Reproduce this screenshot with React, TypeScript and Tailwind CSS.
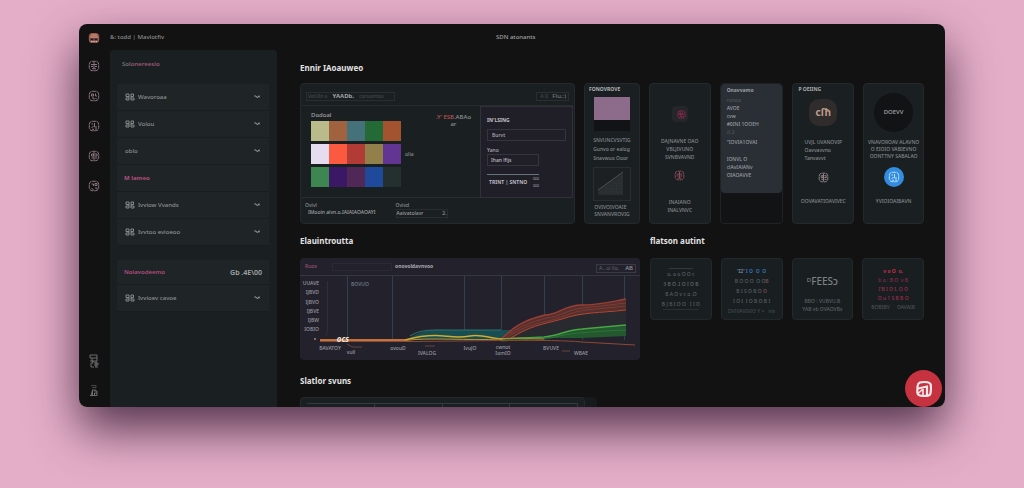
import React from 'react';

const blobPaths = [
  'M3 4.500h6M3 6.500h2M7 6.500h2M4 8.800h4M6 2v7',
  'M3.500 4h2v2h-2zM7.500 3.500v2.500H9M4 8h2v1.500M7.500 8L9 9.500',
  'M3.500 8l2-2M6.500 3v4H9M4 9.300h2M8 8v2M3.500 4H5',
  'M3.500 4h2v2h-2zM7 4h2v2H7M3.500 8h2M7 8h2.500M6 2v8',
  'M3.500 4h2v2M7 3.500h2v2H7zM3.500 8.500l2 1M7 8h2v1.500',
];

function Blob({ variant, className }: { variant: number; className?: string }) {
  return (
    <svg viewBox="0 0 12 12" className={className ?? 'size-3'} fill="none" stroke="currentColor" strokeWidth="1">
      <rect x="1.300" y="1.300" width="9.400" height="9.400" rx="3" strokeDasharray="4 0.500" />
      <path d={blobPaths[variant]} />
    </svg>
  );
}

function RowGlyph() {
  return (
    <svg viewBox="0 0 10 8" className="h-2 w-[10px] shrink-0 text-[#8d9394]" fill="none" stroke="currentColor" strokeWidth="0.900">
      <path d="M1 1h3v2.500H1zM1 5h3v2H1zM4 3.500V5M6 1h2.500v2.500H6zM6 5h3v2H6M6 3.500V7" />
    </svg>
  );
}

function Chevron() {
  return (
    <svg viewBox="0 0 6 4" className="h-1 w-[6px] text-[#969c9d]" fill="none" stroke="currentColor" strokeWidth="1">
      <path d="M0.300 1h1.700l.8 1.400h1L4.500 1h1.200M5 1v1.500" />
    </svg>
  );
}

function MenuRow({ label, glyph = true }: { label: string; glyph?: boolean }) {
  return (
    <button className="flex h-[27px] w-full items-center gap-[3px] border-b border-[#191d1f] bg-[#1f2426] pr-[9px] pl-2 text-left font-medium">
      {glyph && <RowGlyph />}
      <span className="flex-1 text-[#8c9192]">{label}</span>
      <Chevron />
    </button>
  );
}

function Rail() {
  return (
    <nav aria-label="Tools" className="flex w-[31px] shrink-0 flex-col items-center pr-[2px] pb-[3px] text-[#8b7580]">
      <div className="flex h-[27px] items-center">
        <svg viewBox="0 0 12 12" className="size-3">
          <rect x="0.800" y="1" width="10.400" height="10" rx="3.600" fill="#94594b" />
          <path d="M2 5h8M3 3h6" stroke="#dda183" strokeWidth="0.900" />
          <path d="M2.500 6.500h3v1.800h-3zM6.500 6.500h3v1.800h-3z" fill="#1f1b35" />
          <path d="M3 9.500h1.500M5.300 9.500h1.400M7.700 9.500H9" stroke="#c9c0c2" />
        </svg>
      </div>
      {[0, 1, 2, 3, 4].map((n) => (
        <button key={n} aria-label={'Tool ' + (n + 1)} className="flex h-[30px] items-center">
          <Blob variant={n} />
        </button>
      ))}
      <button aria-label="Library" className="mt-auto flex h-[29px] items-center text-[#77777a]">
        <svg viewBox="0 0 10 14" className="h-[14px] w-[10px]" fill="none" stroke="currentColor" strokeWidth="0.900">
          <path d="M1 1h7v3H1zM3 4v3h5V4M1 7h3v2H2v4h3M5 9h4v2H5M6 13h3M7 7v6" />
        </svg>
      </button>
      <button aria-label="Settings" className="flex h-[29px] items-center text-[#77777a]">
        <svg viewBox="0 0 10 14" className="h-[14px] w-[10px]" fill="none" stroke="currentColor" strokeWidth="0.900">
          <path d="M2 2.500h5v2H3" stroke="#4d4d50" />
          <path d="M3 7h4M2 12.500l1.500-5v5M1 12.500h7M5 8h3v2H5.500v2M8 10v2.500" />
        </svg>
      </button>
    </nav>
  );
}

function Sidebar() {
  return (
    <aside className="w-[167px] shrink-0 rounded-t bg-[#1a1f21] pr-2 pl-[7px]">
      <h2 className="mb-[5px] flex h-[29px] items-center pl-[5px] font-semibold text-[#9c5878]">
        <span className="text-[#77707a]">Sol</span>onereesio
      </h2>
      <MenuRow label="Wavoroaa" />
      <MenuRow label="Volou" />
      <MenuRow label="oblo" glyph={false} />
      <div className="flex h-[27px] items-center border-b border-[#191d1f] bg-[#1f2426] pl-[7px] font-bold text-[#b04e80]">
        M lameo
      </div>
      <MenuRow label="Ivviow Vvands" />
      <MenuRow label="Ivvtoo evioeoo" />
      <div className="mt-[14px] flex h-[25px] items-center justify-between border-b border-[#191d1f] bg-[#1f2426] pr-[7px] pl-[7px] font-semibold text-[#b04e80]">
        Noiavodeemo
        <span className="text-[7px] text-[#a4a9aa]">Gb .4E\00</span>
      </div>
      <MenuRow label="Ivvioev cavoe" />
    </aside>
  );
}

const swatches = [
  ['bg-[#b9bb8a]', 'bg-[#a0623f]', 'bg-[#45727a]', 'bg-[#236a37]', 'bg-[#a35330]'],
  ['bg-[#e5dcf0]', 'bg-[#fb5a41]', 'bg-[#b33b36]', 'bg-[#92804a]', 'bg-[#633593]'],
  ['bg-[#3d8652]', 'bg-[#3a1866]', 'bg-[#512758]', 'bg-[#1f4a9c]', 'bg-[#24302f]'],
];

function ColourCard() {
  return (
    <section className="flex flex-col rounded border border-[#23292c] bg-[#1a1f22] px-px pb-px font-medium text-[#8b9092]">
      <div className="flex h-[22px] items-center justify-between border-b border-[#272c2f] px-1 pt-1">
        <div className="flex h-[9px] w-[89px] items-center gap-[5px] border border-[#292f31] px-px text-[#454b4e]">
          VolUln v <b className="text-[6px] font-bold text-[#a0a4a5]">YAADb,</b> coroomoo
        </div>
        <div className="flex h-[9px] w-[33px] items-center justify-end gap-1 border border-[#292f31] px-[2px] text-[#43494c]">
          A II <span className="text-[6px] text-[#73787b]">Flu,:)</span>
        </div>
      </div>
      <div className="flex h-[92px]">
        <div className="flex flex-1 justify-between border-b border-[#282e30] pt-[6px] pl-[9px]">
          <div className="flex flex-col gap-[3px]">
            <div className="mb-[-1px] text-[6px] text-[#a0a3a4]">Dodoal</div>
            {swatches.map((row, i) => (
              <div key={i} className="flex items-center gap-1">
                <div className="flex">
                  {row.map((c) => (
                    <span key={c} className={'h-5 w-[18px] ' + c} />
                  ))}
                </div>
                {i === 1 && <span>olia</span>}
              </div>
            ))}
          </div>
          <div className="pt-[2px] pr-[9px] text-center text-[6px]">
            <span className="text-[#bf5450]">.Y' ESB.</span>ABAo
            <div>ar</div>
          </div>
        </div>
        <div className="flex w-[93px] flex-col items-start border border-[#30313b] bg-[#201f27] px-[6px] pt-[10px]">
          <b className="mb-[5px] text-[#c2c0c8]">IN'LSING</b>
          <input aria-label="Name" defaultValue="Burvt" className="h-3 w-[79px] border border-[#35353e] px-1 text-[#b0aeb6]" />
          <label htmlFor="kind" className="mt-[6px] text-[#b0aeb6]">Yano</label>
          <input id="kind" defaultValue="Ihan lfijs" className="h-3 w-[52px] border border-[#35353e] px-[3px] text-[#c0bec6]" />
          <div className="mt-2 flex w-[52px] justify-between border-t border-[#65747a] pl-[2px]">
            <b className="pt-1 text-[#b9b7bf]">TRINT | SNTNO</b>
            <span className="text-[#8c8b93]">oo<br />oo</span>
          </div>
        </div>
      </div>
      <div className="flex gap-5 px-[3px] pt-1">
        <div>
          Ovivl
          <div className="pl-[3px] text-[#a0a4a5]">IMooin alvn.o.IAIAIAOAOAYI</div>
        </div>
        <div className="flex-1">
          Ovivd
          <div className="flex w-[52px] justify-between border border-[#282e30] text-[#999da0]">
            <span>Aaivatolavr</span>
            <span>2.</span>
          </div>
        </div>
      </div>
    </section>
  );
}

const tile = 'flex flex-col rounded border border-[#23292c] bg-[#1a1f22] font-medium text-[#868b8d] overflow-hidden whitespace-nowrap';

function TopTiles() {
  return (
    <>
      <section className={tile + ' items-center pt-[2px]'}>
        <b className="self-start pl-1 text-[#b1b5b7]">FONOVROVE</b>
        <div className="mt-1 h-[23px] w-9 bg-[#8c6b8b]" />
        <div className="h-[11px] w-9 bg-[#111314]" />
        <div className="mt-[5px] leading-[9px]">
          SNVUNCVSVTIG
          <br />
          Gunvo or ealog
          <br />
          Snavwuo Ooor
        </div>
        <svg viewBox="0 0 38 34" className="mt-1 h-[34px] w-[38px]">
          <rect x="0.500" y="0.500" width="37" height="33" fill="#1c2022" stroke="#292f31" />
          <path d="M5 23L30 5v23H5z" fill="#282d2f" />
          <path d="M5 23L30 5" stroke="#4b5052" />
          <path d="M8 25h22M13 22h17M18 19h12M21 16h9M25 13h5M28 10h2" stroke="#3a3f41" strokeDasharray="1 1.500" />
        </svg>
        <div className="mt-[3px] leading-[7px]">
          OVIVOIVOAIE
          <br />
          SNVANVROVIG
        </div>
      </section>

      <section className={tile + ' items-center pt-[22px] text-[#8a7f80]'}>
        <div className="flex size-4 items-center justify-center rounded bg-[#24262a] pl-1 text-[#bb2e55]">
          <Blob variant={1} className="size-[9px]" />
        </div>
        <div className="mt-[15px] text-center leading-2">
          DAJNAVNE OAO
          <br />
          VBLJIVUNO
          <br />
          SVNBVAVND
        </div>
        <div className="mt-[9px] text-[#94505e]">
          <Blob variant={0} className="size-[11px]" />
        </div>
        <div className="mt-[17px] text-center leading-2">
          INAIANO
          <br />
          INALVNVC
        </div>
      </section>

      <div className="flex flex-col rounded border border-[#202324] bg-[#121314]">
        <section className="h-[109px] rounded bg-[#292f35] px-[6px] pt-[2px] leading-2 font-medium whitespace-nowrap text-[#9a9fa2]">
          <b>Onavvamo</b>
          <div className="pt-[2px] text-[#50575c]">ronoo</div>
          <div>AVOE</div>
          <div>cvw</div>
          <div>#0INI 1OOEH</div>
          <div className="text-[#50575c]">cl.2</div>
          <div className="pt-[2px]">"IOVIA1OVAI</div>
          <div className="pt-[9px]">IONVL O</div>
          <div>clAvIAlANv</div>
          <div>OIAOAVVE</div>
        </section>
      </div>

      <section className={tile + ' items-center pt-[2px]'}>
        <b className="self-start pl-[5px] text-[#a9adaf]">P OEIING</b>
        <div className="mt-[6px] flex h-[27px] w-7 items-center justify-center rounded-[10px] bg-[#302c2b] text-[10px] font-bold text-[#bd9c8e]">
          cſħ
        </div>
        <div className="mt-[12px] leading-2">
          UVJL UVANOVIP
          <br />
          Oavvavvno
          <br />
          Tanvavvt
        </div>
        <div className="mt-[10px] text-[#99888b]">
          <Blob variant={3} className="size-[11px]" />
        </div>
        <div className="mt-[15px]">OOVAVATIOAVIVEC</div>
      </section>

      <section className={tile + ' items-center pt-[9px]'}>
        <div className="flex size-[39px] items-center justify-center rounded-full bg-[#111314] text-[6px] text-[#a7a9aa]">DOEVV</div>
        <div className="mt-[7px] text-center leading-[7px]">
          VNAVOROAV ALAVNO
          <br />
          O EIOIO VABIEVNO
          <br />
          OONTTNY SABALAO
        </div>
        <div className="mt-[7px] flex size-5 items-center justify-center rounded-full bg-[#338ce0] text-[#bce0fa]">
          <Blob variant={2} className="size-3" />
        </div>
        <div className="mt-[11px]">YVIOIOAIBAVN</div>
      </section>
    </>
  );
}

const yLabels: [string, number][] = [['UUAVE', 9], ['IJBVD', 18], ['IJBVO', 28], ['IJBVE', 37], ['IJBW', 46], ['IOBIO', 55]];
const xLabels: [string, number, number][] = [
  ['BAVATOY', 330, 350], ['vull', 351, 354], ['ovouD', 398, 350], ['IVALOG', 427, 355], ['IvuJO', 470, 350],
  ['cwnot', 503, 349], ['IomIO', 503, 355], ['BVUVE', 551, 350], ['WBAE', 581, 355],
];

function ChartCard() {
  return (
    <section className="overflow-hidden rounded bg-[#23222c] font-medium">
      <div className="flex h-[18px] items-center justify-between border-b border-[#343843] pr-1 pl-[5px]">
        <div className="flex items-center">
          <span className="w-[27px] text-[#99566e]">Ruov</span>
          <span className="h-2 w-[60px] border border-[#2b2a34]" />
          <b className="ml-[3px] text-[#a9a9b3]">onovoldavnvoo</b>
        </div>
        <div className="mt-1 flex h-[9px] w-10 items-center justify-between border border-[#3a3a45] px-[2px] text-[#5b5c68]">
          A.. oi llo, <span className="text-[6px] text-[#93949d]">AB</span>
        </div>
      </div>
      <svg viewBox="0 0 340 84" className="block w-full" fontSize="5" fill="#9a9ba4" role="img" aria-label="Growth over time">
        <g stroke="#2e4150" fill="none">
          <path d="M47.500 0v62M92.500 0v66M164.500 0v64M201.500 0v64M244.500 0v64M282.500 0v64M324.500 0v64" />
          <path d="M27.500 5v48l-1 7" stroke="#302f39" />
        </g>
        {yLabels.map(([t, y]) => (
          <text key={y} x="19" y={y} textAnchor="end">{t}</text>
        ))}
        <text x="51" y="10" fill="#718089">BOVUO</text>
        <path d="M105 64C113 62 118 54 136 54H215V63z" fill="#184e51" />
        <path d="M110 60C118 55 126 54 136 54H201" stroke="#2a7470" fill="none" />
        <path d="M200 64C212 53 220 45 245 39C258 39 264 29 282 29C300 29 310 26 326 23V34C300 35 282 38 262 43C235 49 230 56 211 62z" fill="#55302f" />
        <path d="M211 62C230 51 240 48 262 43C282 38 300 35 326 34V60H245z" fill="#292a2f" />
        <path d="M245 62C258 60 266 54 282 53L326 50V60L282 62z" fill="#24582f" />
        <g fill="none">
          <path d="M200 64C212 53 220 45 245 39C258 39 264 29 282 29C300 29 310 26 326 23" stroke="#9b3e34" strokeWidth="1.300" />
          <path d="M203 62C216 53 224 48 247 42C260 41 268 33 284 32L326 27M206 62C218 54 226 50 248 45C262 42 270 36 286 34L326 30" stroke="#803b31" />
          <path d="M211 62C230 50 240 49 262 43C282 36 300 37 326 34" stroke="#b5472f" />
          <path d="M201 63L244 61C258 60 266 54 282 53L326 49" stroke="#48a546" strokeWidth="1.400" />
          <path d="M201 65L250 62C266 58 280 56 326 54" stroke="#2b7438" />
          <path d="M20 64H105C120 60 134 59 144 60S160 62 170 60S190 62 202 63" stroke="#d1ab2f" strokeWidth="1.500" />
          <path d="M105 64.500C130 61 170 65 200 63S225 63 244 63" stroke="#b99134" />
          <path d="M20 64H105" stroke="#c0743d" strokeWidth="1.800" />
          <path d="M20 65.500H110C180 65 250 63 282 66L335 69" stroke="#8d4933" />
          <path d="M47 68l5 3h10M125 70h10M262 75h8" stroke="#65443d" />
        </g>
        <circle cx="15" cy="63" r="0.900" fill="#c58c72" />
        <text x="43" y="66" textAnchor="middle" fontSize="8" fontWeight="bold" fontStyle="italic" fill="#eee6df">ocs</text>
        {xLabels.map(([t, x, y]) => (
          <text key={t} x={x - 300} y={y - 276} textAnchor="middle">{t}</text>
        ))}
      </svg>
    </section>
  );
}

const small = 'flex h-[62px] flex-col items-center rounded border border-[#22292d] bg-[#191e21] overflow-hidden whitespace-nowrap text-center';

function StatTiles() {
  return (
    <div className="grid grid-cols-4 gap-[9px] font-medium text-[#596165]">
      <section className={small + ' justify-center leading-[10px]'}>
        <div className="h-px w-6 bg-[#343a3c]" />
        <div>o. o o O O c</div>
        <div className="text-[#666d70]">3 B O .I O I O B</div>
        <div>B A O v c o .O</div>
        <div>B J B I O O &nbsp; I I O</div>
        <div className="h-px w-9 bg-[#2b3133]" />
      </section>
      <section className={small + ' justify-center pt-1 leading-[10px]'}>
        <div className="font-bold text-[#336cad]"><span className="text-[#6c7e9a]">'I2'</span> I O &nbsp;O &nbsp;O</div>
        <div>B O O O &nbsp;O O<span className="text-[#87504f]">B</span></div>
        <div>B I S O B O <span className="text-[#87504f]">O</span></div>
        <div>I O I &nbsp;I O B O B I</div>
        <div className="text-[#414a4e]">DVIVAVIVIO Y = &nbsp; nls</div>
      </section>
      <section className={small + ' pt-[14px]'}>
        <div className="text-[10px] leading-4 text-[#7c8182]"><sup className="text-[6px]">D</sup>FEESↄ</div>
        <div className="mt-[8px] leading-2">
          BBO : VUBVU.B
          <br />
          YAB vb OVAOVBs
        </div>
      </section>
      <section className={small + ' pt-2 leading-[9px] text-[#882d48]'}>
        <b className="text-[#c52e50]">v o O &nbsp;o.</b>
        <div>b o : B O &nbsp;v B</div>
        <div className="text-[#a12d4b]">I'B I O I, O O</div>
        <div className="text-[#a12d4b]">O u 1 S B B O</div>
        <div className="flex w-full justify-between px-2 text-[#4d5254]"><span>BOBIBV</span><span>OAVAIB</span></div>
      </section>
    </div>
  );
}

const heading = 'text-[8px] leading-[10px] font-bold text-[#e2e2e2]';

export default function App() {
  return (
    <div className="flex h-screen bg-[#e5aec8] px-[79px] pt-6 pb-[81px] font-['Noto_Sans','Open_Sans',sans-serif]">
      <div className="relative flex w-full rounded-lg shadow-[0_22px_48px_rgba(45,20,45,0.8)]">
        <div className="flex w-full overflow-hidden rounded-lg bg-[#121212]">
          <Rail />
          <div className="flex min-w-0 flex-1 flex-col text-[6px] leading-[7px]">
            <header className="grid h-[26px] shrink-0 grid-cols-[386fr_449fr] items-center font-medium text-[#8d8d8d]">
              <span>&amp;: todd | Mavlotfiv</span>
              <span className="text-[#a0a0a0]">SDN atonants</span>
            </header>
            <div className="flex min-h-0 flex-1">
              <Sidebar />
              <main className="min-w-0 flex-1 pt-[13px] pr-[21px] pl-[23px] text-[5px]">
                <h2 className={heading}>Ennir IAoauweo</h2>
                <div className="mt-[10px] grid h-[141px] grid-cols-[276fr_56fr_62fr_64fr_62fr_61fr] gap-[9px] *:min-w-0">
                  <ColourCard />
                  <TopTiles />
                </div>
                <div className="mt-3 grid grid-cols-[340fr_274fr] gap-[10px]">
                  <div>
                    <h2 className={heading + ' mb-3'}>Elauintroutta</h2>
                    <ChartCard />
                  </div>
                  <div>
                    <h2 className={heading + ' mb-3'}>flatson autint</h2>
                    <StatTiles />
                  </div>
                </div>
                <h2 className={heading + ' mt-4'}>Slatlor svuns</h2>
                <div className="mt-[11px] flex w-[297px] rounded-t bg-[#171a1c]">
                  <div className="h-8 w-[285px] rounded-t border border-[#23282b] bg-[#1a1f22] px-[6px] pt-[5px]">
                    <div className="grid h-5 grid-cols-4 border-t border-[#343a3e] *:border-r *:border-[#343a3e]">
                      <span /><span /><span /><span />
                    </div>
                  </div>
                </div>
              </main>
            </div>
          </div>
        </div>
        <button aria-label="Open assistant" className="absolute right-[3px] bottom-0 flex size-[37px] items-center justify-center rounded-full bg-[#c6323f]">
          <svg viewBox="0 0 18 18" className="size-[18px]" fill="none" stroke="#f6e8e8">
            <path d="M2.500 6.500C3 2 6 2 9.500 2S15.500 2.500 15.800 5S16 11 15.500 13.500S12 16 8.500 16S2.500 15.500 2.300 12.500z" strokeWidth="2.200" />
            <path d="M3 8.500L12 6.500V15" strokeWidth="2.200" />
            <path d="M3 13.500L8 9M8 9v6" strokeWidth="1.600" />
          </svg>
        </button>
      </div>
    </div>
  );
}
